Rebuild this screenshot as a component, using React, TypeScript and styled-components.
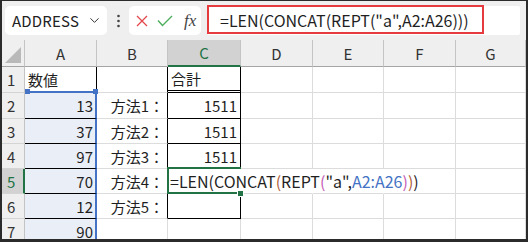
import React from "react";
import styled, { createGlobalStyle, css } from "styled-components";
import { ChevronDown } from "lucide-react";

const GlobalStyle = createGlobalStyle`
  html, body {
    margin: 0;
    padding: 0;
    background: #fff;
  }
  body {
    font-family: "Noto Sans CJK JP", "Noto Sans", sans-serif;
    color: #1f1f1f;
  }
`;

const GREEN = "#217346";
const GRID = "#dcdcdc";
const RANGE = "#4472c4";

const Frame = styled.div`
  width: 528px;
  height: 242px;
  box-sizing: border-box;
  border-style: solid;
  border-color: #2b2b2b;
  border-width: 1px 2px 3px 2px;
  background: #fff;
  overflow: hidden;
  display: flex;
  flex-direction: column;
`;

const Toolbar = styled.div`
  flex: none;
  height: 39px;
  box-sizing: border-box;
  background: #efefef;
  display: flex;
  align-items: center;
  padding: 0 6px 0 3px;
`;

const Box = styled.div`
  height: 29px;
  box-sizing: border-box;
  background: #fff;
  border-radius: 5px;
  display: flex;
  align-items: center;
`;

const NameBox = styled(Box)`
  width: 102px;
  justify-content: space-between;
  padding: 0 5px 0 7px;
  font-size: 15px;
  color: #222;
  letter-spacing: 0.2px;
`;

const Dots = styled.div`
  width: 22px;
  display: flex;
  justify-content: center;
`;

const FxBox = styled(Box)`
  width: 72px;
  padding: 0 4px 0 7px;
  gap: 9px;
`;

const FxLabel = styled.span`
  font-family: "Liberation Serif", "DejaVu Serif", serif;
  font-style: italic;
  font-size: 17px;
  color: #444;
  margin-left: 2px;
`;

const FormulaBar = styled(Box)`
  flex: 1;
  margin-left: 6px;
  border-radius: 2px;
`;

const Highlight = styled.div`
  width: 277px;
  height: 29px;
  box-sizing: border-box;
  border: 2px solid #e53b3f;
  display: flex;
  align-items: center;
  padding-left: 11px;
  font-size: 16px;
  color: #1f1f1f;
  white-space: nowrap;
  margin-top: -2px;
`;

const Sheet = styled.div`
  display: grid;
  grid-template-columns: 23px 72px 71px 73px 72px 71px 72px 70px;
  grid-template-rows: 27px 26px 26px 25px 25px 25px 25px 25px;
  font-size: 15px;
`;

const HeaderBase = styled.div<{ $selected?: boolean }>`
  box-sizing: border-box;
  background: ${(p) => (p.$selected ? "#d2d2d2" : "#efefef")};
  color: ${(p) => (p.$selected ? GREEN : "#333")};
  display: flex;
  align-items: center;
`;

const Corner = styled(HeaderBase)`
  position: relative;
  border-right: 1px solid #c4c4c4;
  border-bottom: 1px solid #a5a5a5;
  svg {
    position: absolute;
    right: 3px;
    bottom: 3px;
  }
`;

const ColHeader = styled(HeaderBase)`
  justify-content: center;
  border-right: 1px solid #c4c4c4;
  border-bottom: ${(p) => (p.$selected ? `2px solid ${GREEN}` : "1px solid #a5a5a5")};
`;

const RowHeader = styled(HeaderBase)`
  padding-left: 5px;
  border-bottom: 1px solid #d4d4d4;
  border-right: ${(p) => (p.$selected ? `2px solid ${GREEN}` : "1px solid #c4c4c4")};
`;

type CellProps = {
  $align?: "left" | "right";
  $right?: string;
  $bottom?: string;
  $range?: boolean;
  $rangeTop?: boolean;
  $active?: boolean;
};

const Cell = styled.div<CellProps>`
  position: relative;
  box-sizing: border-box;
  display: flex;
  align-items: center;
  justify-content: ${(p) => (p.$align === "right" ? "flex-end" : "flex-start")};
  padding: ${(p) => (p.$align === "right" ? "0 3px 0 0" : "0 0 0 3px")};
  white-space: nowrap;
  border-right: ${(p) => p.$right ?? `1px solid ${GRID}`};
  border-bottom: ${(p) => p.$bottom ?? `1px solid ${GRID}`};
  background: ${(p) => (p.$range ? "#e9eef7" : "transparent")};

  ${(p) =>
    p.$rangeTop &&
    css`
      &::before,
      &::after {
        content: "";
        position: absolute;
        top: -4px;
        width: 5px;
        height: 5px;
        background: ${RANGE};
        z-index: 2;
      }
      &::before {
        left: 0;
      }
      &::after {
        right: -3px;
      }
    `}

  ${(p) =>
    p.$active &&
    css`
      padding-left: 2px;
      border-right-color: transparent;
      &::after {
        content: "";
        position: absolute;
        top: -2px;
        left: -1px;
        right: -1px;
        bottom: -1px;
        border: 2px solid ${GREEN};
        border-right: none;
        pointer-events: none;
        z-index: 2;
      }
      &::before {
        content: "";
        position: absolute;
        right: -4px;
        bottom: -4px;
        width: 5px;
        height: 5px;
        background: ${GREEN};
        border: 1px solid #fff;
        z-index: 3;
      }
    `}
`;

const FormulaText = styled.span`
  font-size: 16px;
`;

const Token = styled.span<{ $color?: string }>`
  color: ${(p) => p.$color ?? "#1f1f1f"};
`;

const BLACK = "1px solid #000";
const BLUE = `2px solid ${RANGE}`;

const values = [13, 37, 97, 70, 12, 90];
const totals: (string | null)[] = ["1511", "1511", "1511", null, ""];
const columns = ["A", "B", "C", "D", "E", "F", "G"];

function ColoredFormula() {
  const brown = "#b0603a";
  const pink = "#c35bb5";
  return (
    <FormulaText>
      <Token>=LEN(CONCAT</Token>
      <Token $color={brown}>(</Token>
      <Token>REPT</Token>
      <Token $color={pink}>(</Token>
      <Token>"a",</Token>
      <Token $color={RANGE}>A2:A26</Token>
      <Token $color={pink}>)</Token>
      <Token $color={brown}>)</Token>
      <Token>)</Token>
    </FormulaText>
  );
}

function Toolbox() {
  return (
    <Toolbar>
      <NameBox>
        <span>ADDRESS</span>
        <ChevronDown size={15} strokeWidth={1.6} color="#333" />
      </NameBox>
      <Dots>
        <svg width="3" height="14" viewBox="0 0 3 14">
          <circle cx="1.5" cy="2" r="1.3" fill="#444" />
          <circle cx="1.5" cy="7" r="1.3" fill="#444" />
          <circle cx="1.5" cy="12" r="1.3" fill="#444" />
        </svg>
      </Dots>
      <FxBox>
        <svg width="12" height="12" viewBox="0 0 12 12">
          <path d="M1 1L11 11M11 1L1 11" stroke="#e2474b" strokeWidth="1.3" fill="none" />
        </svg>
        <svg width="16" height="12" viewBox="0 0 16 12">
          <path d="M1 5.5L5.5 10.5L15 1" stroke="#4cae5c" strokeWidth="1.4" fill="none" />
        </svg>
        <FxLabel>fx</FxLabel>
      </FxBox>
      <FormulaBar>
        <Highlight>=LEN(CONCAT(REPT("a",A2:A26)))</Highlight>
      </FormulaBar>
    </Toolbar>
  );
}

function Grid() {
  const rows = [1, 2, 3, 4, 5, 6, 7];
  return (
    <Sheet>
      <Corner>
        <svg width="16" height="16" viewBox="0 0 16 16">
          <path d="M16 0L16 16L0 16Z" fill="#b9b9b9" />
        </svg>
      </Corner>
      {columns.map((c) => (
        <ColHeader key={c} $selected={c === "C"}>
          {c}
        </ColHeader>
      ))}
      {rows.map((r) => {
        const i = r - 2;
        const inRange = r >= 2;
        const hasBox = r <= 6;
        return (
          <React.Fragment key={r}>
            <RowHeader $selected={r === 5}>{r}</RowHeader>
            {/* A */}
            <Cell
              $align={r === 1 ? "left" : "right"}
              $range={inRange}
              $rangeTop={r === 2}
              $right={inRange ? BLUE : BLACK}
              $bottom={r === 1 ? BLUE : BLACK}
              style={inRange ? { paddingRight: 2 } : undefined}
            >
              {r === 1 ? "数値" : values[i]}
            </Cell>
            {/* B */}
            <Cell $align="right" $right={hasBox ? BLACK : undefined}>
              {r >= 2 && r <= 6 ? `方法${r - 1}：` : ""}
            </Cell>
            {/* C */}
            {r === 5 ? (
              <Cell $active $bottom={BLACK}>
                <ColoredFormula />
              </Cell>
            ) : (
              <Cell
                $align={r === 1 ? "left" : "right"}
                $right={hasBox ? BLACK : undefined}
                $bottom={r === 1 ? "3px double #000" : hasBox ? BLACK : undefined}
              >
                {r === 1 ? "合計" : hasBox ? totals[i] : ""}
              </Cell>
            )}
            {/* D - G */}
            <Cell $right={r === 5 ? "1px solid transparent" : undefined} />
            <Cell $right={r === 5 ? "1px solid transparent" : undefined} />
            <Cell />
            <Cell />
          </React.Fragment>
        );
      })}
    </Sheet>
  );
}

export default function App() {
  return (
    <>
      <GlobalStyle />
      <Frame>
        <Toolbox />
        <Grid />
      </Frame>
    </>
  );
}
